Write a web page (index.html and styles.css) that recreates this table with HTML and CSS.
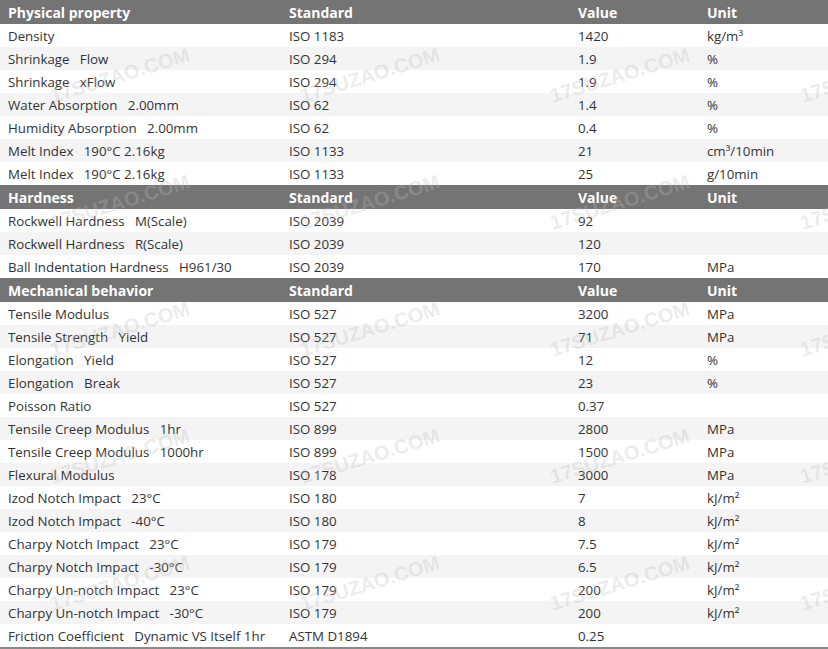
FILE: index.html
```html
<!DOCTYPE html>
<html lang="en">
<head>
<meta charset="utf-8">
<title>Properties</title>
<link rel="stylesheet" href="styles.css">
</head>
<body>
<div class="wrap">
<table class="props">
  <colgroup>
    <col class="c1"><col class="c2"><col class="c3"><col class="c4">
  </colgroup>
  <tbody>
    <tr class="head"><th>Physical property</th><th>Standard</th><th>Value</th><th>Unit</th></tr>
    <tr><td>Density</td><td>ISO 1183</td><td>1420</td><td>kg/m³</td></tr>
    <tr class="alt"><td>Shrinkage&nbsp;&nbsp;&nbsp;Flow</td><td>ISO 294</td><td>1.9</td><td>%</td></tr>
    <tr><td>Shrinkage&nbsp;&nbsp;&nbsp;xFlow</td><td>ISO 294</td><td>1.9</td><td>%</td></tr>
    <tr class="alt"><td>Water Absorption&nbsp;&nbsp;&nbsp;2.00mm</td><td>ISO 62</td><td>1.4</td><td>%</td></tr>
    <tr><td>Humidity Absorption&nbsp;&nbsp;&nbsp;2.00mm</td><td>ISO 62</td><td>0.4</td><td>%</td></tr>
    <tr class="alt"><td>Melt Index&nbsp;&nbsp;&nbsp;190°C 2.16kg</td><td>ISO 1133</td><td>21</td><td>cm³/10min</td></tr>
    <tr><td>Melt Index&nbsp;&nbsp;&nbsp;190°C 2.16kg</td><td>ISO 1133</td><td>25</td><td>g/10min</td></tr>
  </tbody>
  <tbody>
    <tr class="head"><th>Hardness</th><th>Standard</th><th>Value</th><th>Unit</th></tr>
    <tr><td>Rockwell Hardness&nbsp;&nbsp;&nbsp;M(Scale)</td><td>ISO 2039</td><td>92</td><td></td></tr>
    <tr class="alt"><td>Rockwell Hardness&nbsp;&nbsp;&nbsp;R(Scale)</td><td>ISO 2039</td><td>120</td><td></td></tr>
    <tr><td>Ball Indentation Hardness&nbsp;&nbsp;&nbsp;H961/30</td><td>ISO 2039</td><td>170</td><td>MPa</td></tr>
  </tbody>
  <tbody>
    <tr class="head"><th>Mechanical behavior</th><th>Standard</th><th>Value</th><th>Unit</th></tr>
    <tr><td>Tensile Modulus</td><td>ISO 527</td><td>3200</td><td>MPa</td></tr>
    <tr class="alt"><td>Tensile Strength&nbsp;&nbsp;&nbsp;Yield</td><td>ISO 527</td><td>71</td><td>MPa</td></tr>
    <tr><td>Elongation&nbsp;&nbsp;&nbsp;Yield</td><td>ISO 527</td><td>12</td><td>%</td></tr>
    <tr class="alt"><td>Elongation&nbsp;&nbsp;&nbsp;Break</td><td>ISO 527</td><td>23</td><td>%</td></tr>
    <tr><td>Poisson Ratio</td><td>ISO 527</td><td>0.37</td><td></td></tr>
    <tr class="alt"><td>Tensile Creep Modulus&nbsp;&nbsp;&nbsp;1hr</td><td>ISO 899</td><td>2800</td><td>MPa</td></tr>
    <tr><td>Tensile Creep Modulus&nbsp;&nbsp;&nbsp;1000hr</td><td>ISO 899</td><td>1500</td><td>MPa</td></tr>
    <tr class="alt"><td>Flexural Modulus</td><td>ISO 178</td><td>3000</td><td>MPa</td></tr>
    <tr><td>Izod Notch Impact&nbsp;&nbsp;&nbsp;23°C</td><td>ISO 180</td><td>7</td><td>kJ/m²</td></tr>
    <tr class="alt"><td>Izod Notch Impact&nbsp;&nbsp;&nbsp;-40°C</td><td>ISO 180</td><td>8</td><td>kJ/m²</td></tr>
    <tr><td>Charpy Notch Impact&nbsp;&nbsp;&nbsp;23°C</td><td>ISO 179</td><td>7.5</td><td>kJ/m²</td></tr>
    <tr class="alt"><td>Charpy Notch Impact&nbsp;&nbsp;&nbsp;-30°C</td><td>ISO 179</td><td>6.5</td><td>kJ/m²</td></tr>
    <tr><td>Charpy Un-notch Impact&nbsp;&nbsp;&nbsp;23°C</td><td>ISO 179</td><td>200</td><td>kJ/m²</td></tr>
    <tr class="alt"><td>Charpy Un-notch Impact&nbsp;&nbsp;&nbsp;-30°C</td><td>ISO 179</td><td>200</td><td>kJ/m²</td></tr>
    <tr><td>Friction Coefficient&nbsp;&nbsp;&nbsp;Dynamic VS Itself 1hr</td><td>ASTM D1894</td><td>0.25</td><td></td></tr>
  </tbody>
</table>
<div class="wm-layer" aria-hidden="true">
  <span>17SUZAO.COM</span><span>17SUZAO.COM</span><span>17SUZAO.COM</span><span>17SUZAO.COM</span>
  <span>17SUZAO.COM</span><span>17SUZAO.COM</span><span>17SUZAO.COM</span><span>17SUZAO.COM</span>
  <span>17SUZAO.COM</span><span>17SUZAO.COM</span><span>17SUZAO.COM</span><span>17SUZAO.COM</span>
  <span>17SUZAO.COM</span><span>17SUZAO.COM</span><span>17SUZAO.COM</span><span>17SUZAO.COM</span>
  <span>17SUZAO.COM</span><span>17SUZAO.COM</span><span>17SUZAO.COM</span><span>17SUZAO.COM</span>
</div>
</div>
</body>
</html>
```

FILE: styles.css
```css
html, body {
  margin: 0;
  padding: 0;
  background: #ffffff;
  overflow: hidden;
}

.wrap {
  position: relative;
  width: 828px;
  height: 649px;
  overflow: hidden;
}

.props {
  width: 828px;
  border-collapse: collapse;
  table-layout: fixed;
  font-family: "Open Sans", "Noto Sans", sans-serif;
  color: #333333;
  border-bottom: 2px solid #8a8a8a;
}

.c1 { width: 281px; }
.c2 { width: 289px; }
.c3 { width: 129px; }
.c4 { width: 129px; }

.props td,
.props th {
  padding: 0 0 0 8px;
  text-align: left;
  white-space: nowrap;
  vertical-align: top;
}

.props td {
  font-size: 13.3px;
  line-height: 21px;
  padding-top: 2px;
}

.props tr.alt td {
  background: #f4f4f4;
}

.props tr.head th {
  background: #747474;
  color: #ffffff;
  font-weight: 700;
  font-size: 14px;
  line-height: 23px;
  padding-top: 1px;
}

.wm-layer {
  position: absolute;
  top: 12px;
  left: -5px;
  display: grid;
  grid-template-columns: repeat(4, 250px);
  grid-template-rows: repeat(5, 127px);
  pointer-events: none;
}

.wm-layer span {
  display: flex;
  align-items: center;
  justify-content: center;
  font-family: "Liberation Sans", Arial, sans-serif;
  font-weight: 700;
  font-size: 20px;
  color: rgba(190, 190, 190, 0.3);
  transform: rotate(-17deg);
  white-space: nowrap;
}
```
